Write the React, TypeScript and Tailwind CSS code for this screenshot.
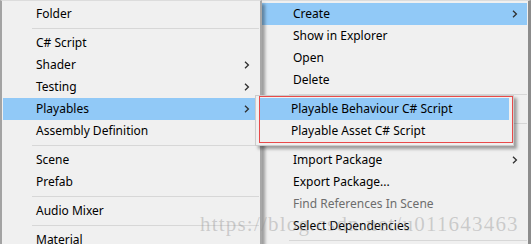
import React from "react";

type Item = { label?: string; sub?: boolean; sep?: boolean; on?: boolean; off?: boolean; blank?: boolean };

const leftItems: Item[] = [
  { label: "Folder" },
  { sep: true },
  { label: "C# Script" },
  { label: "Shader", sub: true },
  { label: "Testing", sub: true },
  { label: "Playables", sub: true, on: true },
  { label: "Assembly Definition" },
  { sep: true },
  { label: "Scene" },
  { label: "Prefab" },
  { sep: true },
  { label: "Audio Mixer" },
  { sep: true },
  { label: "Material" },
];

const mainItems: Item[] = [
  { label: "Create", sub: true, on: true },
  { label: "Show in Explorer" },
  { label: "Open" },
  { label: "Delete" },
  { sep: true },
  { blank: true },
  { sep: true },
  { blank: true },
  { label: "Import Package", sub: true },
  { label: "Export Package..." },
  { label: "Find References In Scene", off: true },
  { label: "Select Dependencies" },
  { sep: true },
];

function Chevron() {
  return (
    <svg width="6" height="8" viewBox="0 0 6 8" className="shrink-0">
      <path d="M1 0.8 L4.4 4 L1 7.2" fill="none" stroke="#2f2f2f" strokeWidth="1.3" />
    </svg>
  );
}

function Row({ item, textPad, sepPad }: { item: Item; textPad: string; sepPad: string }) {
  if (item.sep) {
    return (
      <div className={`h-[7px] pt-[3px] ${sepPad}`}>
        <div className="h-px bg-[#d7d7d7]" />
      </div>
    );
  }
  if (item.blank) return <div className="h-[22px]" />;
  return (
    <div
      className={`flex h-[22px] items-center justify-between pr-[9px] ${textPad} ${item.on ? "bg-[#91c9f7]" : ""} ${
        item.off ? "text-[#6d6d6d]" : "text-black"
      }`}
    >
      <span>{item.label}</span>
      {item.sub && <Chevron />}
    </div>
  );
}

export default function App() {
  return (
    <div className="relative h-[244px] w-[531px] overflow-hidden bg-[#f0f0f0] font-['Noto_Sans','Liberation_Sans',sans-serif] text-[12px] leading-none">
      <div className="flex h-full">
        {/* Create submenu */}
        <div className="relative z-10 w-[262px] shrink-0 border-t border-l-2 border-r-2 border-t-[#dcdcdc] border-l-[#a3a3a3] border-r-[#a8a8a8] bg-[#f0f0f0] pt-[2px] shadow-[3px_4px_3px_rgba(0,0,0,0.35)]">
          <div className="mx-[1px]">
            {leftItems.map((it, i) => (
              <Row key={i} item={it} textPad="pl-[33px]" sepPad="pl-[29px]" />
            ))}
          </div>
        </div>

        {/* context menu */}
        <div className="flex-1 border-t border-r-[3px] border-t-[#dcdcdc] border-r-[#8c8c8c] bg-[#f0f0f0] pt-[2px]">
          <div className="mr-px">
            {mainItems.map((it, i) => (
              <Row key={i} item={it} textPad="pl-[31px]" sepPad="pl-[27px]" />
            ))}
          </div>
        </div>
      </div>

      {/* Playables submenu */}
      <div className="absolute left-[255px] top-[95px] z-20 h-[51px] w-[259px] border border-[#cccccc] bg-[#f0f0f0] pl-[3px] pr-[4px] pt-[2px] shadow-[3px_3px_3px_rgba(0,0,0,0.35)]">
        <div className="flex h-[22px] items-center bg-[#91c9f7] pl-[32px]">Playable Behaviour C# Script</div>
        <div className="flex h-[22px] items-center pl-[32px]">Playable Asset C# Script</div>
      </div>

      {/* annotation */}
      <div className="pointer-events-none absolute left-[259px] top-[96px] z-30 h-[47px] w-[254px] border-[1.5px] border-[#e84a4a]" />

      {/* watermark */}
      <div className="pointer-events-none absolute left-[200px] top-[214px] z-40 font-['Liberation_Serif',serif] text-[21px] leading-none tracking-[1.2px] text-[rgba(140,140,140,0.38)]">
        https://blog.csdn.net/u011643463
      </div>
    </div>
  );
}
